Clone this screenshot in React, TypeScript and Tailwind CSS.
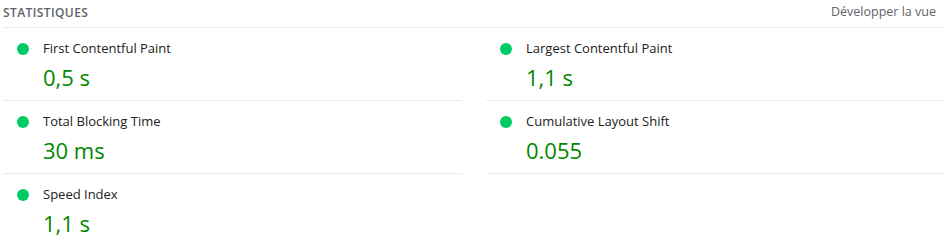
const metrics = [
  { title: "First Contentful Paint", value: "0,5 s" },
  { title: "Largest Contentful Paint", value: "1,1 s" },
  { title: "Total Blocking Time", value: "30 ms" },
  { title: "Cumulative Layout Shift", value: "0.055" },
  { title: "Speed Index", value: "1,1 s" },
];

function Metric({ title, value, last }: { title: string; value: string; last?: boolean }) {
  return (
    <div className={last ? "h-[73px] pt-[12px] pl-[14px]" : "h-[73px] border-b border-[#ebebeb] pt-[12px] pl-[14px]"}>
      <div className="flex items-center gap-[14px] h-[18px]">
        <span className="w-[12px] h-[12px] rounded-full bg-[#0c6] shrink-0" />
        <span className="text-[13px] text-[#212121]">{title}</span>
      </div>
      <div className="pl-[26px] mt-[5px] text-[22px] leading-[28px] text-[#080]">{value}</div>
    </div>
  );
}

export default function App() {
  return (
    <div className="w-[946px] h-[247px] bg-white overflow-hidden pl-[3px] pr-[1px]" style={{ fontFamily: "'Open Sans', 'Noto Sans', sans-serif" }}>
      <div className="flex items-center justify-between h-[28px] border-b border-[#ebebeb] pb-[2px]">
        <span className="text-[12px] font-semibold tracking-[0.4px] text-[#5f6368] uppercase">Statistiques</span>
        <span className="text-[12.5px] text-[#5f6368] pr-[9px]">Développer la vue</span>
      </div>
      <div className="grid grid-cols-[459px_459px] gap-x-[24px]">
        {metrics.map((m, i) => (
          <Metric key={m.title} title={m.title} value={m.value} last={i === metrics.length - 1} />
        ))}
        <div />
      </div>
    </div>
  );
}
